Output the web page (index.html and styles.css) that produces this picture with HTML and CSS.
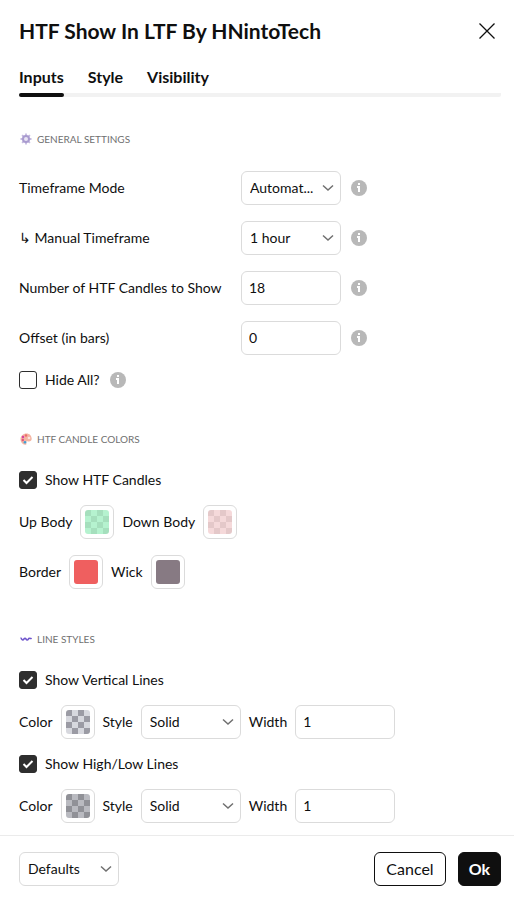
FILE: index.html
```html
<!DOCTYPE html>
<html lang="en">
<head>
  <meta charset="UTF-8">
  <meta name="viewport" content="width=device-width, initial-scale=1.0">
  <title>HTF Show In LTF By HNintoTech</title>
  <link rel="stylesheet" href="styles.css">
</head>
<body>
  <!-- Shared info icon -->
  <svg class="sprite" aria-hidden="true">
    <symbol id="info" viewBox="0 0 16 16">
      <circle cx="8" cy="8" r="8" fill="#b8b8b8"/>
      <path d="M7 3h2v2H7zM6 6h3v6H7V8H6z" fill="#fff"/>
    </symbol>
  </svg>

  <form class="dialog">
    <header class="header">
      <h1>HTF Show In LTF By HNintoTech</h1>
      <button type="button" class="close" aria-label="Close">
        <svg width="18" height="18" viewBox="0 0 18 18"><path d="M1.5 1.5l15 15M16.5 1.5l-15 15" stroke="#0f0f0f" stroke-width="1.3" fill="none"/></svg>
      </button>
    </header>

    <nav class="tabs">
      <a href="#inputs" class="active">Inputs</a>
      <a href="#style">Style</a>
      <a href="#visibility">Visibility</a>
    </nav>

    <main class="content" id="inputs">
      <section>
        <h2>
          <svg width="12" height="12" viewBox="0 0 12 12"><path d="M6 .5v11M.5 6h11M2.1 2.1l7.8 7.8M9.9 2.1l-7.8 7.8" stroke="#c4b9df" stroke-width="1.8"/><circle cx="6" cy="6" r="3" fill="#e9e4f4" stroke="#a99bcf" stroke-width="2"/></svg>
          GENERAL SETTINGS
        </h2>
        <div class="field">
          <label for="mode">Timeframe Mode</label>
          <select id="mode"><option value="auto">Automat...</option><option value="manual">Manual</option></select>
          <svg class="info"><use href="#info"/></svg>
        </div>
        <div class="field">
          <label for="timeframe">↳ Manual Timeframe</label>
          <select id="timeframe"><option>1 hour</option><option>4 hours</option></select>
          <svg class="info"><use href="#info"/></svg>
        </div>
        <div class="field">
          <label for="candles">Number of HTF Candles to Show</label>
          <input type="text" id="candles" value="18">
          <svg class="info"><use href="#info"/></svg>
        </div>
        <div class="field">
          <label for="offset">Offset (in bars)</label>
          <input type="text" id="offset" value="0">
          <svg class="info"><use href="#info"/></svg>
        </div>
        <div class="check">
          <input type="checkbox" id="hideAll">
          <label for="hideAll">Hide All?</label>
          <svg class="info"><use href="#info"/></svg>
        </div>
      </section>

      <section>
        <h2>
          <svg width="12" height="12" viewBox="0 0 12 12"><path d="M6.5.5C3 .5.5 3 .5 6S2.5 11.5 5 11.8c1.5.2 1.7-1 1.3-1.9-.4-1 .4-1.7 1.7-1.5 2 .4 3.7-.5 3.7-2.6C11.7 2.7 9.5.5 6.5.5z" fill="#f3b5a3"/><circle cx="3" cy="4" r="1.2" fill="#d6409f"/><circle cx="6" cy="2.5" r="1.2" fill="#ee6a6a"/><circle cx="2.8" cy="7" r="1.2" fill="#e0567d"/><circle cx="5" cy="9.3" r="1.3" fill="#3e9fd8"/><circle cx="9" cy="5" r="1.3" fill="#fbe6df"/></svg>
          HTF CANDLE COLORS
        </h2>
        <div class="check">
          <input type="checkbox" id="showCandles" checked>
          <label for="showCandles">Show HTF Candles</label>
        </div>
        <div class="row">
          <label for="upBody">Up Body</label>
          <button type="button" class="color" id="upBody"><span class="up"></span></button>
          <label for="downBody">Down Body</label>
          <button type="button" class="color" id="downBody"><span class="down"></span></button>
        </div>
        <div class="row">
          <label for="border">Border</label>
          <button type="button" class="color" id="border"><span class="border"></span></button>
          <label for="wick">Wick</label>
          <button type="button" class="color" id="wick"><span class="wick"></span></button>
        </div>
      </section>

      <section>
        <h2>
          <svg width="12" height="12" viewBox="0 0 12 12"><path d="M.5 5c1 0 1 2 2.2 2S4 5.2 5 5.2 6 7 7.2 7s1-1.8 2.1-1.8S10.5 6 11.5 5" stroke="#6f55cc" stroke-width="1.6" fill="none"/></svg>
          LINE STYLES
        </h2>
        <div class="check">
          <input type="checkbox" id="showVertical" checked>
          <label for="showVertical">Show Vertical Lines</label>
        </div>
        <div class="row">
          <label for="verticalColor">Color</label>
          <button type="button" class="color" id="verticalColor"><span class="vertical"></span></button>
          <label for="verticalStyle">Style</label>
          <select id="verticalStyle"><option>Solid</option><option>Dashed</option></select>
          <label for="verticalWidth">Width</label>
          <input type="text" id="verticalWidth" value="1">
        </div>
        <div class="check">
          <input type="checkbox" id="showHighLow" checked>
          <label for="showHighLow">Show High/Low Lines</label>
        </div>
        <div class="row">
          <label for="highLowColor">Color</label>
          <button type="button" class="color" id="highLowColor"><span class="high-low"></span></button>
          <label for="highLowStyle">Style</label>
          <select id="highLowStyle"><option>Solid</option><option>Dashed</option></select>
          <label for="highLowWidth">Width</label>
          <input type="text" id="highLowWidth" value="1">
        </div>
      </section>
    </main>

    <footer class="footer">
      <select aria-label="Defaults"><option>Defaults</option></select>
      <div class="actions">
        <button type="button" class="cancel">Cancel</button>
        <button type="submit" class="ok">Ok</button>
      </div>
    </footer>
  </form>
</body>
</html>
```
FILE: styles.css
```css
/* Base Styles */
* {
  box-sizing: border-box;
}

body {
  margin: 0;
  background: #fff;
  color: #0f0f0f;
  font-family: Lato, "Open Sans", sans-serif;
  font-size: 14px;
  line-height: 18px;
}

button, input, select {
  font: inherit;
  color: inherit;
  margin: 0;
}

.sprite {
  display: none;
}

.dialog {
  display: flex;
  flex-direction: column;
  min-height: 100vh;
}

/* Header */
.header {
  display: flex;
  align-items: center;
  justify-content: space-between;
  padding: 16px 18px 0 19px;
}

h1 {
  margin: 0;
  font-size: 21px;
  line-height: 30px;
  font-weight: 700;
}

.close {
  display: flex;
  padding: 0;
  border: none;
  background: none;
  cursor: pointer;
}

/* Tabs */
.tabs {
  display: flex;
  gap: 24px;
  margin: 20px 13px 0 19px;
  background: linear-gradient(#f2f2f2, #f2f2f2) bottom / 100% 4px no-repeat;
  border-radius: 2px;
}

.tabs a {
  color: #0f0f0f;
  font-size: 16px;
  line-height: 22px;
  font-weight: 700;
  text-decoration: none;
  padding-bottom: 9px;
}

.tabs a.active::after {
  content: "";
  display: block;
  height: 4px;
  margin: 5px 0 -9px;
  border-radius: 2px;
  background: #0f0f0f;
}

/* Content */
.content {
  flex: 1;
  padding: 31px 13px 12px 19px;
}

section {
  display: flex;
  flex-direction: column;
  gap: 16px;
}

section + section {
  margin-top: 39px;
}

h2 {
  display: flex;
  align-items: center;
  gap: 5px;
  margin: 0 0 5px;
  padding-left: 1px;
  color: #707070;
  font-size: 10px;
  line-height: 22px;
  font-weight: 400;
}

.field {
  display: grid;
  grid-template-columns: 222px 100px 26px;
  align-items: center;
}

.field .info {
  margin-left: 10px;
}

.info {
  width: 16px;
  height: 16px;
}

.check,
.row {
  display: flex;
  align-items: center;
  gap: 8px;
}

.check .info {
  margin-left: 2px;
}

/* Controls */
select,
input[type="text"] {
  width: 100px;
  height: 34px;
  border: 1px solid #dbdbdb;
  border-radius: 6px;
  background: #fff;
}

input[type="text"] {
  padding: 0 7px 2px;
}

select {
  appearance: none;
  padding: 0 25px 0 8px;
  overflow: hidden;
  text-overflow: ellipsis;
  white-space: nowrap;
  background: url("data:image/svg+xml,%3Csvg xmlns='http://www.w3.org/2000/svg' width='12' height='8'%3E%3Cpath d='M1 1.5l5 4.5 5-4.5' fill='none' stroke='%23707070' stroke-width='1.5'/%3E%3C/svg%3E") right 6px center no-repeat;
}

input[type="checkbox"] {
  appearance: none;
  width: 18px;
  height: 18px;
  border: 1px solid #2e2e2e;
  border-radius: 3px;
}

input[type="checkbox"]:checked {
  background: #2e2e2e url("data:image/svg+xml,%3Csvg xmlns='http://www.w3.org/2000/svg' width='12' height='10'%3E%3Cpath d='M1.5 5l3 3 6-6' fill='none' stroke='white' stroke-width='2'/%3E%3C/svg%3E") center no-repeat;
}

.color {
  width: 34px;
  height: 34px;
  padding: 4px;
  border: 1px solid #dbdbdb;
  border-radius: 6px;
  background: #fff;
  cursor: pointer;
}

.color span {
  display: block;
  height: 24px;
  border-radius: 3px;
}

.up {
  background: repeating-conic-gradient(#b5f2cf 0 25%, #a5dfbd 0 50%) 0 0 / 12px 12px;
}

.down {
  background: repeating-conic-gradient(#f5d9da 0 25%, #e4c8c9 0 50%) 0 0 / 12px 12px;
}

.border {
  background: #ef5f5f;
}

.wick {
  background: #877a83;
}

.vertical {
  background: repeating-conic-gradient(#d7d8de 0 25%, #9b9ba4 0 50%) 0 0 / 12px 12px;
}

.high-low {
  background: repeating-conic-gradient(#b9bac0 0 25%, #909197 0 50%) 0 0 / 12px 12px;
}

/* Footer */
.footer {
  display: flex;
  align-items: center;
  justify-content: space-between;
  padding: 16px 13px 13px 19px;
  border-top: 1px solid #ebebeb;
}

.actions {
  display: flex;
  gap: 12px;
}

.actions button {
  height: 34px;
  padding: 0 11px;
  border: 1px solid #0f0f0f;
  border-radius: 6px;
  font-size: 16px;
  cursor: pointer;
}

.actions .cancel {
  background: #fff;
}

.actions .ok {
  padding: 0 10px;
  background: #0f0f0f;
  color: #fff;
  font-weight: 700;
}
```
